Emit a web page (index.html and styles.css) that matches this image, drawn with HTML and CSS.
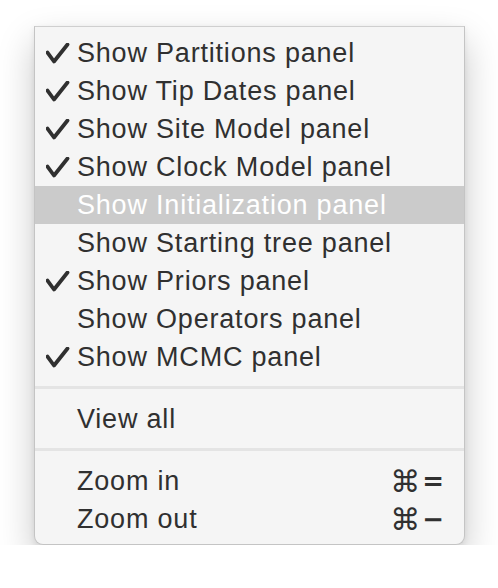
FILE: index.html
```html
<!DOCTYPE html>
<html>
<head>
<meta charset="utf-8">
<link rel="stylesheet" href="styles.css">
</head>
<body>
<div class="menu">
  <div class="item"><span class="check"><svg width="24" height="21" viewBox="0 0 24 21"><path d="M1.5 9.5 L8 18.5 L21.5 1.5" fill="none" stroke="currentColor" stroke-width="3.8" stroke-linecap="round" stroke-linejoin="round"/></svg></span><span class="label">Show Partitions panel</span></div>
  <div class="item"><span class="check"><svg width="24" height="21" viewBox="0 0 24 21"><path d="M1.5 9.5 L8 18.5 L21.5 1.5" fill="none" stroke="currentColor" stroke-width="3.8" stroke-linecap="round" stroke-linejoin="round"/></svg></span><span class="label">Show Tip Dates panel</span></div>
  <div class="item"><span class="check"><svg width="24" height="21" viewBox="0 0 24 21"><path d="M1.5 9.5 L8 18.5 L21.5 1.5" fill="none" stroke="currentColor" stroke-width="3.8" stroke-linecap="round" stroke-linejoin="round"/></svg></span><span class="label">Show Site Model panel</span></div>
  <div class="item"><span class="check"><svg width="24" height="21" viewBox="0 0 24 21"><path d="M1.5 9.5 L8 18.5 L21.5 1.5" fill="none" stroke="currentColor" stroke-width="3.8" stroke-linecap="round" stroke-linejoin="round"/></svg></span><span class="label">Show Clock Model panel</span></div>
  <div class="item active"><span class="check"></span><span class="label">Show Initialization panel</span></div>
  <div class="item"><span class="check"></span><span class="label">Show Starting tree panel</span></div>
  <div class="item"><span class="check"><svg width="24" height="21" viewBox="0 0 24 21"><path d="M1.5 9.5 L8 18.5 L21.5 1.5" fill="none" stroke="currentColor" stroke-width="3.8" stroke-linecap="round" stroke-linejoin="round"/></svg></span><span class="label">Show Priors panel</span></div>
  <div class="item"><span class="check"></span><span class="label">Show Operators panel</span></div>
  <div class="item"><span class="check"><svg width="24" height="21" viewBox="0 0 24 21"><path d="M1.5 9.5 L8 18.5 L21.5 1.5" fill="none" stroke="currentColor" stroke-width="3.8" stroke-linecap="round" stroke-linejoin="round"/></svg></span><span class="label">Show MCMC panel</span></div>
  <div class="sep"></div>
  <div class="item"><span class="check"></span><span class="label">View all</span></div>
  <div class="sep"></div>
  <div class="item"><span class="check"></span><span class="label">Zoom in</span><span class="key"><span class="cmd">⌘</span><span class="sym">=</span></span></div>
  <div class="item"><span class="check"></span><span class="label">Zoom out</span><span class="key"><span class="cmd">⌘</span><span class="sym">−</span></span></div>
</div>
</body>
</html>
```
FILE: styles.css
```css
html, body {
  margin: 0;
  padding: 0;
  background: #ffffff;
}
body {
  padding: 26px 0 0 34px;
  font-family: "Liberation Sans", Arial, sans-serif;
}
.menu {
  width: 429px;
  background: #f5f5f5;
  border: 1px solid #c4c4c4;
  border-top-color: #cfcfcf;
  border-radius: 0 0 9px 9px;
  padding: 7px 0 6px 0;
  box-shadow: 0 16px 36px rgba(0, 0, 0, 0.22), 0 2px 6px rgba(0, 0, 0, 0.08);
  color: #303030;
}
.item {
  display: flex;
  align-items: center;
  height: 38px;
  font-size: 27px;
  letter-spacing: 0.8px;
  padding-right: 20px;
}
.item.active {
  background: #cbcbcb;
  color: #ffffff;
}
.check {
  width: 31px;
  padding-left: 11px;
  display: flex;
  align-items: center;
}
.check svg {
  display: block;
}
.label {
  flex: 1;
  white-space: nowrap;
}
.key {
  display: flex;
  align-items: center;
  white-space: nowrap;
  letter-spacing: 0;
}
.cmd {
  font-family: "DejaVu Sans", sans-serif;
  font-size: 30px;
  margin-right: 2px;
}
.sym {
  font-family: "DejaVu Sans", sans-serif;
  font-size: 26px;
  font-weight: bold;
}
.sep {
  height: 3px;
  background: #e4e4e4;
  margin: 10px 0 11px 0;
}
```
